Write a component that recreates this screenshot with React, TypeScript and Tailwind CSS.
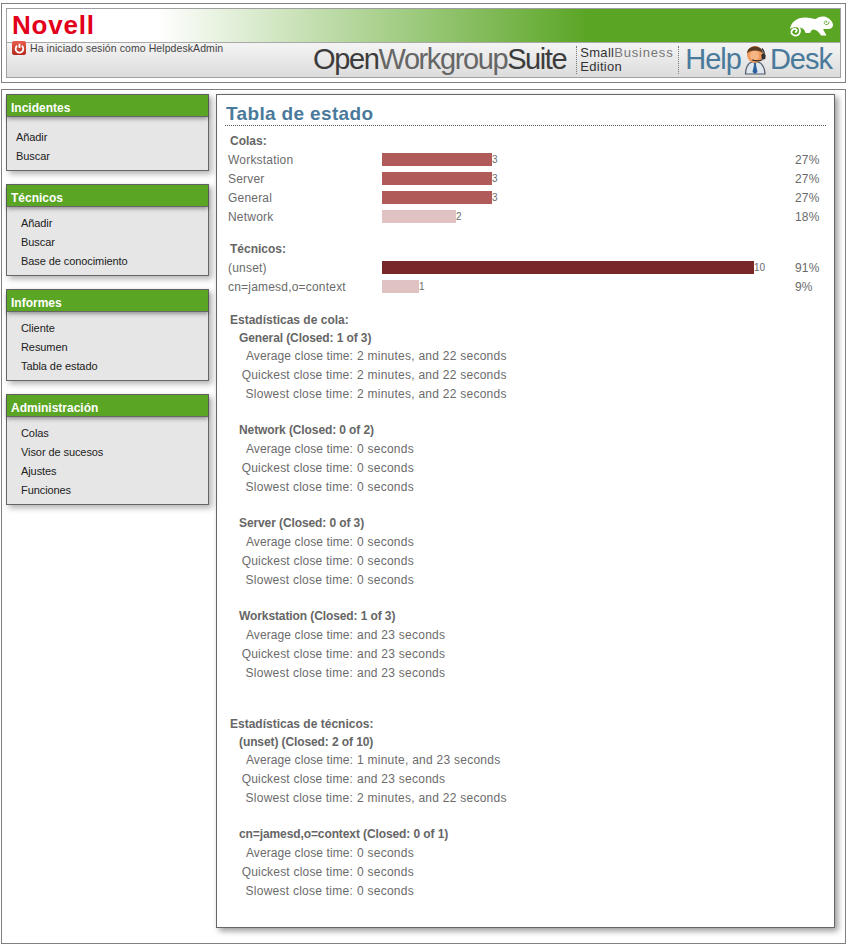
import React from 'react'

const menus = [
	{ title: 'Incidentes', items: ['Añadir', 'Buscar'], first: true },
	{ title: 'Técnicos', items: ['Añadir', 'Buscar', 'Base de conocimiento'] },
	{ title: 'Informes', items: ['Cliente', 'Resumen', 'Tabla de estado'] },
	{ title: 'Administración', items: ['Colas', 'Visor de sucesos', 'Ajustes', 'Funciones'] }
]

const queues = [
	{ name: 'Workstation', w: 'w-[110px]', bg: 'bg-[#b05a5a]', n: 3, pct: '27%' },
	{ name: 'Server', w: 'w-[110px]', bg: 'bg-[#b05a5a]', n: 3, pct: '27%' },
	{ name: 'General', w: 'w-[110px]', bg: 'bg-[#b05a5a]', n: 3, pct: '27%' },
	{ name: 'Network', w: 'w-[74px]', bg: 'bg-[#e0c2c2]', n: 2, pct: '18%' }
]

const techs = [
	{ name: '(unset)', w: 'w-[372px]', bg: 'bg-[#782828]', n: 10, pct: '91%' },
	{ name: 'cn=jamesd,o=context', w: 'w-[37px]', bg: 'bg-[#e0c2c2]', n: 1, pct: '9%' }
]

const closeLabels = [
	{ text: 'Average close time:', spacing: 'tracking-[0.1px]' },
	{ text: 'Quickest close time:', spacing: 'tracking-[0.2px]' },
	{ text: 'Slowest close time:', spacing: 'tracking-[0.25px]' }
]

type Bar = { name: string; w: string; bg: string; n: number; pct: string }

const BarRow = ({ row }: { row: Bar }) => (
	<div className="flex items-center h-[19px] text-[12px] text-[#6b6b6b]">
		<span className="w-[157px] pl-[3px] tracking-[0.2px]">{row.name}</span>
		<div className={`h-[13px] ${row.w} ${row.bg}`} />
		<span className="text-[10px] flex-1">{row.n}</span>
		<span className="w-[31px] tracking-[0.2px]">{row.pct}</span>
	</div>
)

const Section = ({ title, className }: { title: string; className: string }) => (
	<div className={`${className} h-[19px] leading-[21px] font-bold text-[#666666] pl-[5px]`}>{title}</div>
)

const Group = ({
	title,
	values,
	className = '',
	tight = false
}: {
	title: string
	values: string[]
	className?: string
	tight?: boolean
}) => (
	<div className={className}>
		<div className="h-[19px] leading-[19px] font-bold tracking-[-0.1px] text-[#666666] pl-[14px]">{title}</div>
		{closeLabels.map((label, i) => (
			<div key={label.text} className={`flex h-[19px] leading-[19px] text-[#6b6b6b] ${tight && i === 0 ? '-mt-px' : ''}`}>
				<span className={`w-[128px] text-right whitespace-nowrap ${label.spacing}`}>{label.text}</span>
				<span className="pl-[4px] tracking-[0.25px]">{values[i]}</span>
			</div>
		))}
	</div>
)

const Chameleon = () => (
	<svg width="45" height="21" viewBox="0 0 45 21" className="block">
		<path
			d="M2 13 C3 6 9 1.500 17 1.500 C22 1.500 25 3 28 3 C31 0.500 35 0 38 1 C42 2.500 45 6 45 9 C45 11.500 43 13 40 13 L36 13 C35 13 35 14 36 15 L38.500 19.500 L33 19.500 C31 16 29 14 26 13.500 C24 13.500 23 14.500 22 17 L17.500 17 C17 14 15 12 12 11.500 C8 11 4 11 2 13 Z"
			fill="#ffffff"
		/>
		<path d="M7 16 C9 16 9.500 13.500 7.500 13 C4.500 12.500 3 15 3.500 17 C4.500 20 9 20.500 11 18 C13 15.500 12 12 10 10.500" fill="none" stroke="#ffffff" strokeWidth="1.800" />
		<path d="M38 6.500 C39 6.500 39 5 38 5 C36 5 35.500 7.500 37.500 8.500 C39.500 9 41.500 7.500 41 5.500" fill="none" stroke="#5aa524" strokeWidth="0.900" />
	</svg>
)

const Agent = () => (
	<svg width="24" height="30" viewBox="0 0 24 30" className="block">
		<path d="M1.500 29 C1.500 24 3.500 18 8 17 L14 17 C18.500 18 21 24 21 29 Z" fill="#dfe6ee" stroke="#4d5a68" strokeWidth="1.200" />
		<path d="M9.800 17 L12.200 17 L12 20 L13.500 27 L11 29 L8.500 27 L10 20 Z" fill="#2c5f9e" />
		<ellipse cx="11" cy="9.500" rx="8" ry="8.500" fill="#ee9a5c" />
		<ellipse cx="10.500" cy="10.500" rx="4.500" ry="5" fill="#f6b584" />
		<path d="M3 8.500 C3 -1 19 -1 19 8.500 C16 4.500 6 4.500 3 8.500 Z" fill="#5a3a22" />
		<path d="M18 3.500 C20 5.500 20.500 8.500 20 11.500" fill="none" stroke="#333333" strokeWidth="1.400" />
		<rect x="17.500" y="8.500" width="4" height="6" rx="1.800" fill="#2e2e2e" />
		<path d="M18.500 14.500 C16 16.500 12 16 8 15" fill="none" stroke="#2e2e2e" strokeWidth="1.200" />
	</svg>
)

const PowerIcon = () => (
	<div className="w-[14px] h-[14px] -mt-[2px] rounded-[2px] bg-[linear-gradient(180deg,#e8604f,#b5281c)] flex items-center justify-center shrink-0">
		<svg width="11" height="11" viewBox="0 0 11 11">
			<path d="M3.200 2.800 A3.800 3.800 0 1 0 7.800 2.800" fill="none" stroke="#ffffff" strokeWidth="1.800" />
			<path d="M5.500 0.800 V5" stroke="#ffffff" strokeWidth="1.800" />
		</svg>
	</div>
)

export default function App() {
	return (
		<div className="w-[850px] h-[948px] bg-white pt-[3px] pl-[1px] font-['Liberation_Sans',Arial,sans-serif] text-[12px]">
			<div className="w-[845px] h-[80px] border border-[#808080] p-[4px]">
				<div className="h-[70px] border border-[#a0a0a0]">
					<div className="h-[33px] flex justify-between bg-[linear-gradient(90deg,#ffffff_18%,#5aa524_70%)]">
						<span className="pl-[5px] text-[26px] leading-[33px] font-bold text-[#e2001a] tracking-[0.8px]">Novell</span>
						<div className="pt-[7px] pr-[7px]">
							<Chameleon />
						</div>
					</div>
					<div className="h-[35px] border-t border-[#a8a8a8] flex justify-between bg-[linear-gradient(180deg,#f4f4f4,#dcdcdc)]">
						<div className="flex items-start pl-[5px] text-[10.500px] leading-[11px] tracking-[0.08px] text-[#444444]">
							<PowerIcon />
							<span className="pl-[4px]">Ha iniciado sesión como HelpdeskAdmin</span>
						</div>
						<div className="flex items-center pr-[8px]">
							<span className="text-[29px] tracking-[-1.400px] text-[#3c3c3c]">
								Open<span className="text-[#666666]">Workgroup</span>Suite
							</span>
							<div className="ml-[10px] w-[103px] pl-[3px] border-x border-dotted border-[#777777] text-[13px] leading-[14px] tracking-[0.3px] text-[#333333]">
								Small<span className="text-[#777777] tracking-[0.8px]">Business</span>
								<br />
								Edition
							</div>
							<span className="ml-[6px] text-[29px] tracking-[-1px] text-[#4a7a9b]">Help</span>
							<div className="ml-[3px]">
								<Agent />
							</div>
							<span className="ml-[2px] text-[29px] tracking-[-1px] text-[#4a7a9b]">Desk</span>
						</div>
					</div>
				</div>
			</div>
			<div className="mt-[6px] w-[845px] h-[855px] border border-[#808080] flex pl-[4px] pt-[4px]">
				<div className="w-[203px] flex flex-col gap-[13px]">
					{menus.map((menu) => (
						<div key={menu.title} className="border border-[#666666] shadow-[3px_3px_6px_rgba(0,0,0,0.3)] bg-[#e6e6e6]">
							<div className="h-[22px] leading-[27px] bg-[#5aa524] border-b border-[#666666] pl-[4px] text-[12px] font-bold text-white shadow-[0_2px_4px_rgba(0,0,0,0.35)]">
								{menu.title}
							</div>
							<div className={`pb-[4px] text-[11px] tracking-[-0.08px] text-[#222222] ${menu.first ? 'pt-[11px] pl-[9px]' : 'pt-[7px] pl-[14px]'}`}>
								{menu.items.map((item) => (
									<div key={item} className="h-[19px] leading-[19px]">
										{item}
									</div>
								))}
							</div>
						</div>
					))}
				</div>
				<div className="ml-[7px] w-[619px] h-[834px] border border-[#666666] shadow-[3px_3px_6px_rgba(0,0,0,0.4)] pl-[8px] pr-[8px]">
					<h1 className="h-[31px] leading-[38px] border-b border-dotted border-[#555555] pl-[1px] text-[19px] font-bold tracking-[0.35px] text-[#4a7a9b]">
						Tabla de estado
					</h1>
					<Section className="mt-[5px]" title="Colas:" />
					{queues.map((row) => (
						<BarRow key={row.name} row={row} />
					))}
					<Section className="mt-[13px]" title="Técnicos:" />
					{techs.map((row) => (
						<BarRow key={row.name} row={row} />
					))}
					<Section className="mt-[14px]" title="Estadísticas de cola:" />
					<Group tight title="General (Closed: 1 of 3)" values={['2 minutes, and 22 seconds', '2 minutes, and 22 seconds', '2 minutes, and 22 seconds']} />
					<Group className="mt-[17px]" title="Network (Closed: 0 of 2)" values={['0 seconds', '0 seconds', '0 seconds']} />
					<Group className="mt-[17px]" title="Server (Closed: 0 of 3)" values={['0 seconds', '0 seconds', '0 seconds']} />
					<Group className="mt-[17px]" title="Workstation (Closed: 1 of 3)" values={['and 23 seconds', 'and 23 seconds', 'and 23 seconds']} />
					<Section className="mt-[31px]" title="Estadísticas de técnicos:" />
					<Group tight title="(unset) (Closed: 2 of 10)" values={['1 minute, and 23 seconds', 'and 23 seconds', '2 minutes, and 22 seconds']} />
					<Group className="mt-[17px]" title="cn=jamesd,o=context (Closed: 0 of 1)" values={['0 seconds', '0 seconds', '0 seconds']} />
				</div>
			</div>
		</div>
	)
}
